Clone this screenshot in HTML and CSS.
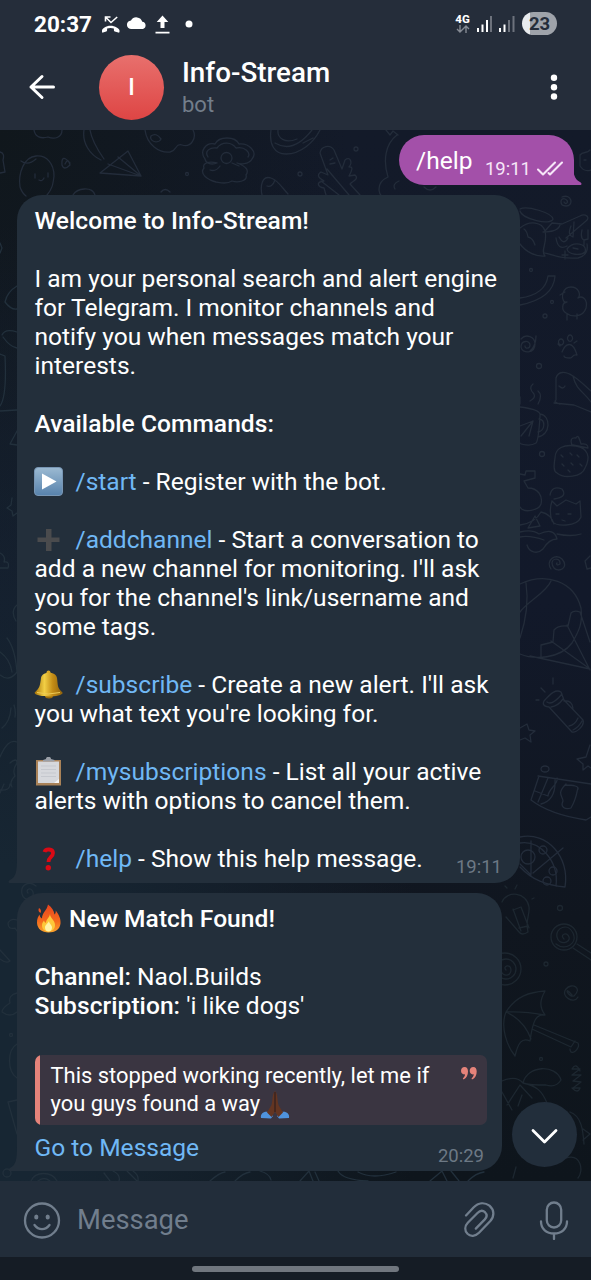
FILE: index.html
```
<!DOCTYPE html>
<html lang="en">
<head>
<meta charset="utf-8">
<title>Info-Stream</title>
<link rel="stylesheet" href="styles.css">
</head>
<body>
<div class="phone">
  <header class="top">
    <div class="status">
      <span class="clock">20:37</span>
      <svg class="st-icons" width="100" height="24" viewBox="0 0 100 24" fill="#fff">
        <path d="M1 18.500c0-2 4-4.800 8.500-4.800s9 2.800 9 4.800v1.300c0 .7-.6 1-1.200.8l-3.600-1.200c-.6-.2-.8-.6-.8-1.200v-1.600c-2.300-.7-4.600-.7-6.800 0v1.600c0 .6-.2 1-.8 1.200l-3.300 1.200c-.6.2-1-.1-1-.8z"/>
        <path d="M4.500 9.500V5h5M5 5.500l5 5L16.200 5" fill="none" stroke="#fff" stroke-width="1.600"/>
        <path d="M30.500 17a4.300 4.300 0 0 1-.5-8.600 6.200 6.200 0 0 1 11.300 1.400A3.700 3.700 0 0 1 42 17z"/>
        <path d="M61.500 3.500l5.800 6.500h-3.800v6h-4v-6h-3.800zM54.500 19.700h14v1.800h-14z"/>
        <circle cx="88" cy="12" r="3.500"/>
      </svg>
      <span class="net"><b>4G</b>
        <svg width="14" height="8" viewBox="0 0 14 8" fill="none" stroke="#858a93" stroke-width="1.400"><path d="M4 0v6.500M1 4l3 3 3-3M10 8V1.500M7 4l3-3 3 3"/></svg>
      </span>
      <svg class="bars" width="38" height="16" viewBox="0 0 38 16"><path fill="#fff" d="M0 12h2v4H0zM4.500 8.500h2V16h-2zM9 4h2v12H9zM22 12h2v4h-2zM26.500 8.500h2V16h-2z"/><path fill="#6d727c" d="M13 0h2v16h-2zM31 4h2v12h-2zM35.500 0h2v16h-2z"/></svg>
      <span class="battery">23</span>
    </div>
    <div class="bar">
      <svg class="back" width="28" height="28" viewBox="0 0 28 28" fill="none" stroke="#fff" stroke-width="3" stroke-linecap="round" stroke-linejoin="round"><path d="M25.500 14H3M14 3.500L3 14l11 10.500"/></svg>
      <div class="avatar">I</div>
      <div class="who"><div class="name">Info-Stream</div><div class="kind">bot</div></div>
      <svg class="more" width="8" height="28" viewBox="0 0 8 28" fill="#fff"><circle cx="4" cy="4.800" r="3.200"/><circle cx="4" cy="14.200" r="3.200"/><circle cx="4" cy="23.500" r="3.200"/></svg>
    </div>
  </header>

  <main class="chat">
    <svg class="doodles" width="591" height="1051" viewBox="0 130 591 1051" fill="none" stroke="#232c3a" stroke-width="1.300" stroke-linecap="round" stroke-linejoin="round">
      <!-- top strip -->
      <path d="M34 130c1 7 7 9 14 7 7 3 14 0 14-7M0 152q5 1 3 8l2 12-5 1"/>
      <path d="M20 187c-2-14 4-30 16-31 11-1 18 8 18 20-1 9-2 13-7 19M20 187q2 6 6 9M21 161q7 5 15-2M35 174v4M48 173v4M39 180q3 2 5-2M70 163q-9-10-8 2 2 6 8 0-2-8-5-1"/>
      <path d="M84 130c-2 13 6 25 17 30M90 130q2 12 14 29M100 173l28-22 13 25zM118 157l23 19M108 164l33 12M73 195c4-7 19-9 22 0"/>
      <path d="M145 130c2 15 14 23 25 22 7-1 5-9 12-7 9 3 15-7 11-15M151 136a5 4 0 1 0 10 3q-5-7-10-3M161 192q4-5 9 0"/>
      <path d="M205 159c-6-8 1-17 10-15 4-8 20-8 24 0 10-1 19 8 13 15-3 6-13 5-15 4q14 5 9 12c2 6-8 8-14 6-6 4-14 1-16 1-8-2-17-8-12-14-2-5 5-7 13-5-5 2-11 1-12-4zM208 157c-4-6 2-10 9-9 5-7 15-6 19 0 9-2 15 5 12 9M221 158a5 5 0 1 0 11 0 5 5 0 0 0-11 0M210 170q6 2 10-4M232 163l7 3"/>
      <path d="M271 130c-2 14 3 24 15 24 15 0 28-12 34-24M278 130c-1 8 7 14 19 9M275 143q18 11 37-13M303 143l10-5M262 195c-2-9 0-20 9-17 7 2 12 11 17 16M267 186q5 2 8-6"/>
      <path d="M320 153c1-7 10-9 14-3l8 19 3-9c5-4 8 2 4 7 6-1 1 7 0 9l6-1c5 4-4 7-5 9l10 11M320 153l8 22-7-3c-6 4 0 7 3 9-9 1-6 6 0 7l2 7M327 169l22 26M321 181l18 14M330 160l3-2M330 164l5-1"/>
      <path d="M386 130l4 5 3-4 5 4M397 135c-12 9-14 26-9 42q-9 4-9 12c0 5 3 7 3 7M399 181q-7 3-4 8M424 187q6 6 12 0"/>
      <circle cx="356" cy="149" r="2"/><circle cx="300" cy="174" r="2"/><circle cx="187" cy="174" r="1.500"/>
      <!-- right margin, upper half -->
      <path d="M590 150c-3 4-7 1-10 5v11c4 6 8 5 11 4M584 160h2M562 197c10-4 12 9 4 9-7 0-6-9-1-7 5 2 1 7-1 3M520 209c7-4 32 4 33 10-2 7-31 0-33-8M520 228c10-8 22-6 25 3 3 12-5 19 0 25-9 1-19-4-25-12M524 229q3 2 4 8 5 1 7 8M545 231l7-8 10 1 18-8c5-3 11 1 6 5l-20 17M543 232q15 0 17-7M545 253c10 3 19 6 33 5q11-3 9-14M556 238q2 13 11 8M559 237q5 9 9 1M571 226q-4 9 2 11l1-15M582 230q-2 8 2 10l4-1v-9M584 240v5M567 249c6-8 21-6 18 3-4 4-17 3-18-3M565 251v8M562 255h6M573 248l5 1"/>
      <path d="M520 298c15-2 26-8 28-22h7c-1 17-15 25-35 29M565 303c-5-6-2-16 6-16s10 8 7 11c5-3 10 2 8 10-3 10-15 9-20 5-5-3-4-11 1-11M560 295l5-3M567 314v6M577 314v5M521 339c5-6 14-2 14 5 0 10-13 10-14 3 0-7 9-7 9-2 0 4-5 4-5 1M536 336q0 10-6 15"/>
      <path d="M561 339a2.500 3 0 1 0 .1 0M570 335a2.500 3.200 0 1 0 .1 0M558 344l2 2M574 343l3-2M562 352c4-10 11-11 15 3-5-1-4 3-7 3q-6 0-6-2M560 404q-7-2-4-4v-22c2-7 9-7 17-2 9 6 14 12 18 15M554 403l20 2 17 7M573 376c3 14 11 16 18 26M559 386q4 4 6 0"/>
      <path d="M533 384q-5 4 1 10 2 4-4 7M538 391q5 4 0 13M520 397v7M520 407c8 1 22 3 20 9-1 17-2 25-4 27-6 4-16 1-16 0M540 414c11 1 11 21-2 23M520 426l13-5-4 15M521 436l12-15M539 419c7 1 6 12-1 13"/>
      <path d="M555 458c0-10 9-14 21-12 12 2 15 11 9 22-3 9-21 11-28 5-4-2-3-8-2-15M572 445q-3-8 4-7 2-5 5 6 7-1 7 4l-15-3"/>
      <path d="M561 455l2 2M570 453l2 2M577 455l2 2M562 464l2 2M571 463l2 2M580 464l2 2M568 470l2 2"/>
      <path d="M520 474l5 1 1-4h9v7l-11 3 4 7c10 0 15 8 13 16-2 6-17 10-21 3M550 495q2-10 12-6 6 8-8 10M552 501l5 5 9-6 10 4 4-3 1 16c-4 10-25 10-29 4-3-9-1-17 0-20M520 525q15-2 21-13 10 2 13 12M520 537q10-2 24 3M535 516l-7 12 12-2-5-10M556 514h3M568 514h3M562 520l3 1"/>
      <circle cx="531" cy="270" r="1.500"/><circle cx="552" cy="302" r="1.500"/><circle cx="545" cy="316" r="2"/><circle cx="539" cy="366" r="2.500"/><circle cx="542" cy="454" r="2.500"/>
      <!-- right margin, lower half -->
      <path d="M520 532q12-3 19 2 15-7 18 5-8 0-14 10c-6 6-14 3-16-4M557 534q14 3 24 0M551 569c-6-9 5-16 11-10 8 9-4 14-8 9-7-10 7-12 6-4-3 2-4 0-3-1M590 556l-5 5 2 8 4-1"/>
      <path d="M520 584c26-12 54-3 61 24 2 15-2 23-9 35-12 16-38 17-52 11M551 581c-5 12-23 20-31 31M526 583c3 20-1 40-6 55M541 656v-11l12-3 1-12q4-5 14-4l3-13q3-3 9-1M530 656l60 13-39-28M567 625l23 45M580 612l10 30"/>
      <path d="M544 701c7-8 12-12 17-9l3 8 19 20c2 6-7 13-11 12l-23-25c-7-1-6-4-5-6zM547 702q5 4 15-8M551 707q7-1 12-8M564 701q8-1 9 7M569 726q6-1 9-8M573 730q6-3 9-9M553 678v6M541 688l4 4M536 700h3M520 728l7-4 2 6 6 1-5 4 1 7-6-4-5 2M590 745l-4 12-9 2 6 5v6l5-4 3 2"/>
      <path d="M541 769a4 3 0 1 0 8 0 4 3 0 0 0-8 0M538 776l53 8M539 776l-8 24c13 10 29 16 55 20l5-3M548 778l-10 24M535 791l13 5c0-7 11-12 9-18M555 780q1 20-14 24M566 784c-10 10-3 12-3 17-3 6 2 9 8 7 6-10 6-18 7-20M565 785q14 0 13 4"/>
      <path d="M520 837c27-6 50 20 45 50-19-2-33-7-45-20M520 843c20-3 39 18 36 43M531 841v33M533 873l30-25M520 864l11 11"/><circle cx="543" cy="850" r="4"/><circle cx="553" cy="871" r="4"/><circle cx="528" cy="857" r="7"/><circle cx="547" cy="881" r="4"/>
      <g stroke="#1d2730">
        <path d="M502 902c5-12 25-10 27 5 1 9-4 12-1 25q-6 4-9 0l-13-15M513 910l8-3 8 21M513 909l8 22M505 886l2 2M517 885l-2 4M532 899l2-1M519 928l9-2"/>
        <circle cx="564" cy="937" r="13"/><path d="M564 939c-5-4 3-8 5-2s-10 9-12 0 11-15 16-4-8 18-17 11M577 944l14 9M573 948l18 12"/>
        <circle cx="505" cy="969" r="16"/><circle cx="506" cy="969" r="10"/><path d="M506 970c-4-4 5-7 5 0s-10 7-10-1M572 995c-9-11-4 3 2 1 9-8-2-14-8-7s8 16 12 8"/>
        <path d="M506 1012c10-16 24-20 39-21-5 9-6 16 0 24-9-1-12 5-15 26-8-4-12 2-15 15-8-10-15-29-9-44zM506 1012q18-1 38 3M506 1012q18 8 25 27M534 1025l44 18c3 6-8 14-8 6M532 1029l39 18 4-6"/>
        <path d="M502 1081q14-6 21 2c4-18 33-19 38-3q-5 8-15 5-16 0-23-2c14 3 19 8 24 20M502 1092l10 18M507 1105l13-20 12 13M522 1095l-4 11M572 1069h8l-8 6h9l-8 6 8 1-8 6h7M572 1069q4-7 8 2M572 1088q6 6 8 0M570 1112c11 4 13 17 14 32M583 1129l7 5-7 6M566 1158c15-5 18 13 12 20M516 1167l-3 11"/>
        <circle cx="560" cy="908" r="2.500"/><circle cx="546" cy="964" r="2"/><circle cx="541" cy="1059" r="1.500"/>
      </g>
      <!-- left margin and the strip under the last bubble -->
      <g stroke="#22303c">
        <path d="M0 243l2 5-2 5M17 286q-10 6-12 16 6 8 12 7M2 335q3-7 15-3M3 337q7 10 14 11M0 354l5 2q2 40-5 50M0 411l17-1M17 431l-7 13 7 1M12 498l-1 7-4 3 5 3 1 5 4-3M0 553q6 3 4 9 6-1 4 6H0M17 605q-7 6-1 16M7 638q8 10 10 34c-6 8-12 7-17 3M0 652q10 7 12 20M2 728q8-6 9-20M14 705q2 6 1 12M0 757q8-19 17-15M10 763q7-6 7 0-5 7-2 13-6 6-3 11M4 784l-4 9M10 784q0 7-10 6"/>
        <path d="M36 886c-7-6-16-1-14 8s13 4 11-2-8-2-5 1M17 920q-6-2-9 3 0 7 7 5l2 3M0 950l10 11q-4 3-10-2M17 993q-9 2-7 10-8 5-8 9 8 6 15 0"/>
        <path d="M17 1044c-10 6-10 27 0 34M17 1100l-9 2 9 32"/>
        <circle cx="7" cy="1173" r="4"/><circle cx="11" cy="1035" r="1.500"/>
        <path d="M31 1181c4-10 21-10 26 0M38 1181q6-5 12 0M104 1173l6 8M113 1171q8 4 6 10M127 1171l10 10M133 1171q6 4 5 10M210 1181q9-8 15-9M235 1181q8-8 15-9M260 1171q10 3 11 9M300 1181l9-10 4 10M315 1172l4 9M338 1171q5 9 30 10M358 1172q15 8 38 0M430 1181l12-10 5 10M451 1171l8 10M468 1181q8-8 16-9"/>
      </g>
    </svg>

    <div class="bubble out">
      <svg class="tail-out" width="16" height="24" viewBox="0 0 16 24"><path fill="#a350a9" d="M0 0h7c0 12 1 18 7 21 2 1 2 3 0 3H0z"/></svg>
      <span class="cmd">/help</span><span class="time">19:11</span>
      <svg class="ticks" width="28" height="16" viewBox="0 0 28 16" fill="none" stroke="#f6e6f8" stroke-width="2.100" stroke-linecap="round" stroke-linejoin="round"><path d="M2 8.500l5 5L19 1.500M12.500 12l1.500 1.500 12-12"/></svg>
    </div>

    <div class="bubble in first">
      <svg class="tail-in" width="16" height="24" viewBox="0 0 16 24"><path fill="#232f3b" d="M16 0H9c0 12-1 18-7 21-2 1-2 3 0 3h14z"/></svg>
      <p><b>Welcome to Info-Stream!</b></p>
      <p>I am your personal search and alert engine<br>for Telegram. I monitor channels and<br>notify you when messages match your<br>interests.</p>
      <p><b>Available Commands:</b></p>
      <p><svg class="emoji" viewBox="0 0 29 29"><defs><linearGradient id="pl" x1="0" y1="0" x2="0" y2="1"><stop offset="0" stop-color="#9cbad2"/><stop offset="1" stop-color="#5782ac"/></linearGradient></defs><rect x=".5" y=".5" width="28" height="28" rx="3.500" fill="url(#pl)" stroke="#7896b4"/><path d="M8 6.500v16L22.500 14.500z" fill="#fff"/></svg><span class="gap"></span><a>/start</a> - Register with the bot.</p>
      <p><svg class="emoji" viewBox="0 0 29 29"><path d="M12 4h5.500v8.500h8V17h-8v9H12v-9H3.500v-4.500H12z" fill="#4a4b4d"/></svg><span class="gap"></span><a>/addchannel</a> - Start a conversation to<br>add a new channel for monitoring. I'll ask<br>you for the channel's link/username and<br>some tags.</p>
      <p><svg class="emoji" viewBox="0 0 29 29"><defs><linearGradient id="bl"><stop offset="0" stop-color="#a87408"/><stop offset=".35" stop-color="#f2cf45"/><stop offset=".65" stop-color="#c38c16"/><stop offset="1" stop-color="#8f620c"/></linearGradient></defs><circle cx="14.500" cy="2.500" r="2" fill="#d9a728"/><ellipse cx="15" cy="26" rx="4" ry="2.500" fill="#9b6b0c"/><path d="M7 8c1-7 15-7 16 0 1 7 0 10 5.500 14.500 1 2-6 4-14 4S0 24.500.700 22.500C6 18 6 15 7 8z" fill="url(#bl)"/><path d="M3 22.500q11 3 23 0" fill="none" stroke="#edcb55"/></svg><span class="gap"></span><a>/subscribe</a> - Create a new alert. I'll ask<br>you what text you're looking for.</p>
      <p><svg class="emoji" viewBox="0 0 29 29"><path d="M2 3h25v25.500H2z" fill="#a98258"/><path d="M4 4.500h21V26H4z" fill="#d6d8dc"/><path d="M9 4.500h11.500V3l-3.500-1c0-3-5-3-5 0L9 3z" fill="#9ba0a8"/><path d="M7 9h15M7 12.500h15M7 16h15M7 19.500h15" stroke="#c5c8ce"/><path d="M20 26l5-4v4z" fill="#f5f5f5"/></svg><span class="gap"></span><a>/mysubscriptions</a> - List all your active<br>alerts with options to cancel them.</p>
      <p><svg class="emoji" viewBox="0 0 29 29"><path d="M10.500 8c1-3.500 8.500-3.500 8.500 1 0 4-4.500 4-4.500 9" fill="none" stroke="#d90a15" stroke-width="3.800"/><circle cx="14.300" cy="23.700" r="2.700" fill="#d90a15"/></svg><span class="gap"></span><a>/help</a> - Show this help message.</p>
      <span class="time">19:11</span>
    </div>

    <div class="bubble in second">
      <svg class="tail-in" width="16" height="24" viewBox="0 0 16 24"><path fill="#232f3b" d="M16 0H9c0 12-1 18-7 21-2 1-2 3 0 3h14z"/></svg>
      <p><svg class="emoji" viewBox="0 0 29 29"><defs><linearGradient id="fr" x1="0" y1="0" x2="0" y2="1"><stop offset="0" stop-color="#e8441f"/><stop offset=".6" stop-color="#f46a1c"/><stop offset="1" stop-color="#f9a12c"/></linearGradient></defs><path d="M14 .5c4 3 6 6 6.500 10 1-1 1.500-2.500 1.200-4 3 4 5.300 8 4.800 13-.6 6-5.500 9-12 9S3.500 25 3 19c-.3-4 1.500-7 2.500-8.500.3 2 1 3 2.500 4 0-6 5-8 6-14zM5 4c2 1 2.500 3 1.500 5-2-1-2.500-3-1.500-5z" fill="url(#fr)"/><path d="M16 10c0 4 5 6 5 11 0 4-2.500 6.500-6.500 6.500S8 25 8 21.500c0-2 .8-3.500 2-5 .5 1.500 1 2 2 2.500 0-4 3.500-5 4-9z" fill="#fdc83a"/><path d="M15 17c0 3 3 3.500 3 6.500 0 2.500-1.500 4-3.500 4S11 26 11 23.500c0-3 3-3.500 4-6.500z" fill="#fff3a8"/></svg><span class="gap s"></span><b>New Match Found!</b></p>
      <p class="tight"><b>Channel:</b> Naol.Builds<br><b>Subscription:</b> 'i like dogs'</p>
      <blockquote class="quote">
        <svg class="marks" width="16" height="13" viewBox="0 0 16 13" fill="#e5837a"><path d="M3.500 0C6 0 7 2 7 4.500 7 8 5.500 11 3 12.200c-1 .4-1.500-.6-.8-1.200C3.300 10 4 9 4 7.300 1.500 7.800 0 6 0 3.800 0 1.500 1.500 0 3.500 0zM12.200 0c2.500 0 3.500 2 3.500 4.500 0 3.500-1.500 6.500-4 7.700-1 .4-1.500-.6-.8-1.200 1.100-1 1.800-2 1.800-3.700-2.500.5-4-1.300-4-3.500 0-2.300 1.500-3.800 3.500-3.800z"/></svg>
        This stopped working recently, let me if<br>you guys found a way<svg class="pray" viewBox="0 0 30 29"><path d="M1 28c-1-4 3-7 7-6l5 4-2 2.500zM29 28c1-4-3-7-7-6l-5 4 2 2.500z" fill="#4f93dd"/><path d="M14.800 1c-2.600 3-2 9-3.300 14L7 22.500l4.500 4.500 3.300-5zM15.200 1c2.600 3 2 9 3.300 14l4.500 7.500-4.500 4.500-3.300-5z" fill="#633522"/><path d="M15 2v20" stroke="#2e1a17" stroke-width="1"/></svg>
      </blockquote>
      <a class="go">Go to Message</a>
      <span class="time">20:29</span>
    </div>

    <div class="down"><svg width="28" height="16" viewBox="0 0 28 16" fill="none" stroke="#fff" stroke-width="2.800" stroke-linecap="round" stroke-linejoin="round"><path d="M2 2.500L13.500 14 25 2.500"/></svg></div>
  </main>

  <footer class="composer">
    <svg width="38" height="38" viewBox="0 0 38 38" fill="none" stroke="#717e8d" stroke-width="2.300" stroke-linecap="round"><circle cx="19" cy="19.500" r="17"/><path d="M11.500 24c4 5.500 11 5.500 15 0"/><g fill="#717e8d" stroke="none"><ellipse cx="13.300" cy="16" rx="2.100" ry="2.600"/><ellipse cx="24.700" cy="16" rx="2.100" ry="2.600"/></g></svg>
    <span class="ph">Message</span>
    <svg class="clip" width="34" height="38" viewBox="0 0 34 38" fill="none" stroke="#717e8d" stroke-width="2.300" stroke-linecap="round"><path d="M3 14.500l7.500-8c5-5 11-5.500 16-1.800 5 4.500 5 10.500.8 15.300L16 31.800c-3.500 3.600-8.500 4-11.500 1-3-3.200-3-7.500.3-11L14.500 12c2.500-2.600 5.500-2.600 7.500-.8 2 2 2 4.800-.2 7.200l-9 9.200"/></svg>
    <svg class="mic" width="30" height="40" viewBox="0 0 30 40" fill="none" stroke="#717e8d" stroke-width="2.300" stroke-linecap="round"><rect x="7.800" y="2.500" width="14.400" height="25" rx="7.200"/><path d="M2 21.500c0 7.500 5.500 12 13 12s13-4.500 13-12M15 33.500V39"/></svg>
  </footer>
  <div class="nav"><span class="handle"></span></div>
</div>
</body>
</html>
```
FILE: styles.css
```
* { box-sizing: border-box; }
body { margin: 0; background: #161d26; font-family: Roboto, "Liberation Sans", sans-serif; color: #fff; }
p { margin: 0 0 29px; }
b { font-weight: 500; letter-spacing: .05px; }
.phone { width: 591px; height: 1280px; display: flex; flex-direction: column; overflow: hidden; }

.top { height: 130px; background: #252d3a; flex: none; }
.status { height: 48px; display: flex; align-items: center; padding: 0 34px 1px 34px; }
.clock { font-size: 22.500px; font-weight: 700; width: 58px; line-height: 24px; }
.st-icons { margin-left: 9px; }
.net { margin-left: auto; width: 15px; display: flex; flex-direction: column; align-items: center; margin-right: 7px; }
.net b { font-size: 11.500px; font-weight: 800; line-height: 11px; }
.bars { margin-right: 7px; }
.battery { width: 35px; height: 23px; border-radius: 12px; background: linear-gradient(90deg, #e9ebee 23%, #9fa3aa 23%); color: #252d3a; font-weight: 700; font-size: 18.500px; line-height: 24px; text-align: center; }
.bar { height: 82px; display: flex; align-items: center; padding: 0 33px 4px 28px; }
.avatar { width: 65px; height: 65px; border-radius: 50%; margin-left: 43px; background: linear-gradient(#e8706d, #de4544); display: flex; align-items: center; justify-content: center; font-size: 23px; font-weight: 500; }
.who { margin-left: 18px; }
.name { font-size: 27.800px; font-weight: 500; line-height: 32px; margin-top: 1px; }
.kind { font-size: 22px; line-height: 27px; color: #737e8a; margin-top: 2px; }
.more { margin-left: auto; }

.chat { position: relative; flex: 1; padding: 5px 9px 0 17px; display: flex; flex-direction: column; align-items: flex-start; background: radial-gradient(ellipse 420px 800px at 0 85%, #172633 0, #172633 20%, rgba(23,38,51,0) 100%), radial-gradient(ellipse 350px 500px at 0 0, #10171c 0, rgba(16,23,28,0) 100%), linear-gradient(#131a29 0, #12192a 45%, #10161f 75%, #0e151c 100%); }
.doodles { position: absolute; left: 0; top: 0; }
.bubble { position: relative; font-size: 24.550px; line-height: 29px; }
.out { align-self: flex-end; width: 175px; height: 50px; margin-right: 8px; margin-bottom: 10px; background: #a350a9; border-radius: 25px 25px 3px 25px; display: flex; align-items: center; padding: 0 10px 0 17px; white-space: nowrap; }
.tail-out { position: absolute; right: -8px; bottom: 0; }
.out .time { margin-left: auto; font-size: 18.500px; margin-top: 18px; color: #f6e6f8; }
.ticks { margin: 17px 0 0 5px; }
.in { background: #232f3b; border-radius: 25px 25px 25px 3px; white-space: nowrap; padding: 11px 17px 10px 17.500px; }
.tail-in { position: absolute; left: -9px; bottom: 0; }
.in .time { position: absolute; right: 18px; bottom: 4px; font-size: 18.500px; line-height: 24px; color: #6d7985; }
.second .time { bottom: 3px; }
.first { width: 503px; height: 688px; margin-bottom: 10px; }
.first p:last-of-type { margin: 0; }
.second { width: 485px; height: 278px; }
.emoji { display: inline-block; width: 29px; height: 29px; vertical-align: top; margin-left: -.5px; }
.gap { display: inline-block; width: 12.500px; }
.gap.s { width: 6px; }
a { color: #70b8f5; }
.tight { margin-bottom: 35px; }
.quote { position: relative; margin: 0; width: 452px; height: 70px; padding: 6.500px 0 0 16px; border-radius: 7px; font-size: 21.920px; line-height: 28.500px; background: linear-gradient(90deg, #e5837a 5px, #3a3541 5px); }
.marks { position: absolute; right: 10px; top: 12px; }
.pray { display: inline-block; width: 30px; height: 29px; vertical-align: top; }
.go { display: block; margin-top: 8px; }
.down { position: absolute; right: 14px; bottom: 14px; width: 65px; height: 65px; border-radius: 50%; background: #222e3b; display: flex; align-items: center; justify-content: center; padding-top: 3px; }

.composer { height: 76px; flex: none; background: #222d3a; display: flex; align-items: center; padding: 1px 22px 0 23px; }
.ph { font-size: 27.400px; color: #717e8d; margin: 1px 0 0 16px; }
.clip { margin-left: auto; }
.mic { margin-left: 42px; }
.nav { height: 23px; flex: none; background: #151c25; display: flex; justify-content: center; padding-top: 9px; }
.handle { width: 207px; height: 6px; border-radius: 3px; background: #70767e; }
```
